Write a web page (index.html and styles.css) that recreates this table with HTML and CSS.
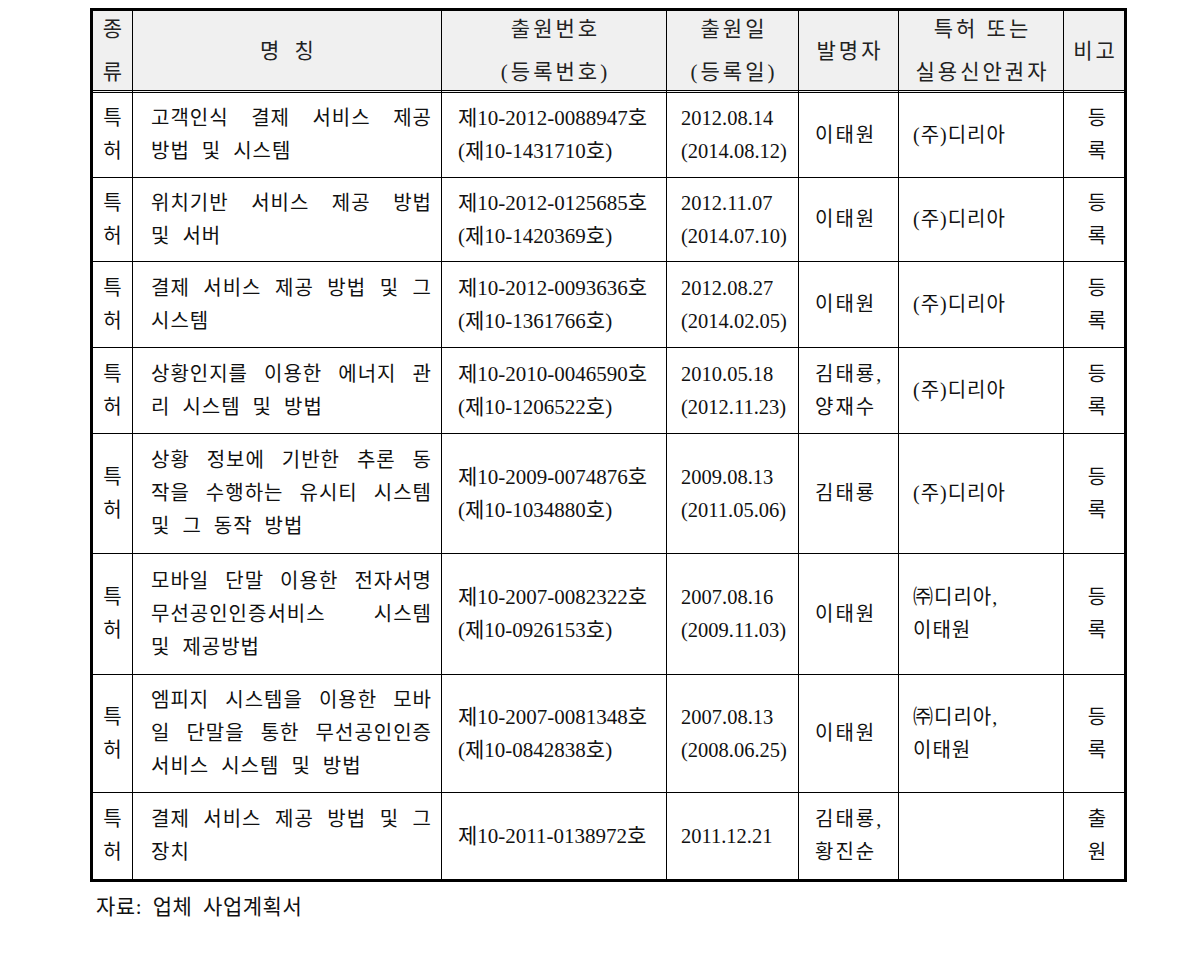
FILE: index.html
```html
<!DOCTYPE html>
<html lang="ko">
<head>
<meta charset="utf-8">
<title>특허 현황</title>
<link rel="stylesheet" href="styles.css">
</head>
<body>
<div class="page">
<table class="pt">
  <colgroup>
    <col class="c1"><col class="c2"><col class="c3"><col class="c4"><col class="c5"><col class="c6"><col class="c7">
  </colgroup>
  <thead>
    <tr>
      <th class="kind"><span class="hl">종</span><span class="hl second">류</span></th>
      <th><span class="hl wide">명 칭</span></th>
      <th><span class="hl">출원번호</span><span class="hl second">(등록번호)</span></th>
      <th><span class="hl">출원일</span><span class="hl second">(등록일)</span></th>
      <th><span class="hl">발명자</span></th>
      <th><span class="hl">특허 또는</span><span class="hl second">실용신안권자</span></th>
      <th class="last"><span class="hl">비고</span></th>
    </tr>
  </thead>
  <tbody>
    <tr class="r2">
      <td class="kind">특<br>허</td>
      <td class="name"><span class="ln j">고객인식 결제 서비스 제공</span><span class="ln">방법 및 시스템</span></td>
      <td class="num">제10-2012-0088947호<br>(제10-1431710호)</td>
      <td class="date">2012.08.14<br>(2014.08.12)</td>
      <td class="inv">이태원</td>
      <td class="own">(주)디리아</td>
      <td class="note">등<br>록</td>
    </tr>
    <tr class="r2a">
      <td class="kind">특<br>허</td>
      <td class="name"><span class="ln j">위치기반 서비스 제공 방법</span><span class="ln">및 서버</span></td>
      <td class="num">제10-2012-0125685호<br>(제10-1420369호)</td>
      <td class="date">2012.11.07<br>(2014.07.10)</td>
      <td class="inv">이태원</td>
      <td class="own">(주)디리아</td>
      <td class="note">등<br>록</td>
    </tr>
    <tr class="r2b">
      <td class="kind">특<br>허</td>
      <td class="name"><span class="ln j">결제 서비스 제공 방법 및 그</span><span class="ln">시스템</span></td>
      <td class="num">제10-2012-0093636호<br>(제10-1361766호)</td>
      <td class="date">2012.08.27<br>(2014.02.05)</td>
      <td class="inv">이태원</td>
      <td class="own">(주)디리아</td>
      <td class="note">등<br>록</td>
    </tr>
    <tr class="r2b">
      <td class="kind">특<br>허</td>
      <td class="name"><span class="ln j">상황인지를 이용한 에너지 관</span><span class="ln">리 시스템 및 방법</span></td>
      <td class="num">제10-2010-0046590호<br>(제10-1206522호)</td>
      <td class="date">2010.05.18<br>(2012.11.23)</td>
      <td class="inv">김태룡,<br>양재수</td>
      <td class="own">(주)디리아</td>
      <td class="note">등<br>록</td>
    </tr>
    <tr class="r3">
      <td class="kind">특<br>허</td>
      <td class="name"><span class="ln j">상황 정보에 기반한 추론 동</span><span class="ln j">작을 수행하는 유시티 시스템</span><span class="ln">및 그 동작 방법</span></td>
      <td class="num">제10-2009-0074876호<br>(제10-1034880호)</td>
      <td class="date">2009.08.13<br>(2011.05.06)</td>
      <td class="inv">김태룡</td>
      <td class="own">(주)디리아</td>
      <td class="note">등<br>록</td>
    </tr>
    <tr class="r3b">
      <td class="kind">특<br>허</td>
      <td class="name"><span class="ln j">모바일 단말 이용한 전자서명</span><span class="ln j">무선공인인증서비스 시스템</span><span class="ln">및 제공방법</span></td>
      <td class="num">제10-2007-0082322호<br>(제10-0926153호)</td>
      <td class="date">2007.08.16<br>(2009.11.03)</td>
      <td class="inv">이태원</td>
      <td class="own">㈜디리아,<br>이태원</td>
      <td class="note">등<br>록</td>
    </tr>
    <tr class="r3c">
      <td class="kind">특<br>허</td>
      <td class="name"><span class="ln j">엠피지 시스템을 이용한 모바</span><span class="ln j">일 단말을 통한 무선공인인증</span><span class="ln">서비스 시스템 및 방법</span></td>
      <td class="num">제10-2007-0081348호<br>(제10-0842838호)</td>
      <td class="date">2007.08.13<br>(2008.06.25)</td>
      <td class="inv">이태원</td>
      <td class="own">㈜디리아,<br>이태원</td>
      <td class="note">등<br>록</td>
    </tr>
    <tr class="r2c lastrow">
      <td class="kind">특<br>허</td>
      <td class="name"><span class="ln j">결제 서비스 제공 방법 및 그</span><span class="ln">장치</span></td>
      <td class="num">제10-2011-0138972호</td>
      <td class="date">2011.12.21</td>
      <td class="inv">김태룡,<br>황진순</td>
      <td class="own"></td>
      <td class="note">출<br>원</td>
    </tr>
  </tbody>
</table>
<p class="src">자료: 업체 사업계획서</p>
</div>
</body>
</html>
```

FILE: styles.css
```css
html, body {
  margin: 0;
  padding: 0;
  background: #fff;
}
body {
  font-family: "Liberation Serif", "Noto Sans CJK KR", serif;
  color: #111;
  font-size: 20px;
}
.page {
  padding: 8px 0 0 90px;
}
.pt {
  border-collapse: separate;
  border-spacing: 0;
  border: 3px solid #000;
  table-layout: fixed;
  width: 1037px;
}
.c1 { width: 40px; }
.c2 { width: 309px; }
.c3 { width: 225px; }
.c4 { width: 132px; }
.c5 { width: 100px; }
.c6 { width: 165px; }
.c7 { width: 60px; }

.pt th, .pt td {
  border-right: 1px solid #000;
  border-bottom: 1px solid #000;
  padding: 0;
  vertical-align: middle;
  line-height: 33px;
  font-weight: normal;
}
.pt th.last, .pt td.note { border-right: none; }
.pt tr.lastrow td { border-bottom: none; }

.pt thead th {
  background: #f0f0f0;
  height: 79px;
  text-align: center;
  border-bottom: 3px double #000;
  font-size: 21px;
  color: #222;
}
.hl {
  display: block;
  line-height: 24px;
  letter-spacing: 3px;
  padding-left: 3px;
}
.hl.second { margin-top: 19px; }
.hl.wide { word-spacing: 4px; }
.kind .hl { letter-spacing: 0; padding-left: 0; }

.r2 td { height: 84px; }
.r2a td { height: 83px; }
.r2b td { height: 85px; }
.r3 td { height: 119px; }
.r3b td { height: 120px; }
.r3c td { height: 117px; }
.r2c td { height: 86px; }

.kind { text-align: center; }
.name {
  padding: 0 9px 0 18px !important;
  letter-spacing: 1px;
  word-spacing: 6px;
}
.ln {
  display: block;
  text-align: left;
}
.ln.j {
  text-align: justify;
  text-align-last: justify;
}
.num { padding-left: 16px !important; font-size: 21px; }
.date { padding-left: 14px !important; font-size: 20.5px; }
.inv { padding-left: 16px !important; letter-spacing: 2px; }
.own { padding-left: 14px !important; letter-spacing: 1px; }
.note { text-align: center; padding-left: 6px !important; }

.src {
  margin: 8px 0 0 6px;
  font-size: 21px;
  letter-spacing: 0.5px;
  word-spacing: 5px;
}
```
